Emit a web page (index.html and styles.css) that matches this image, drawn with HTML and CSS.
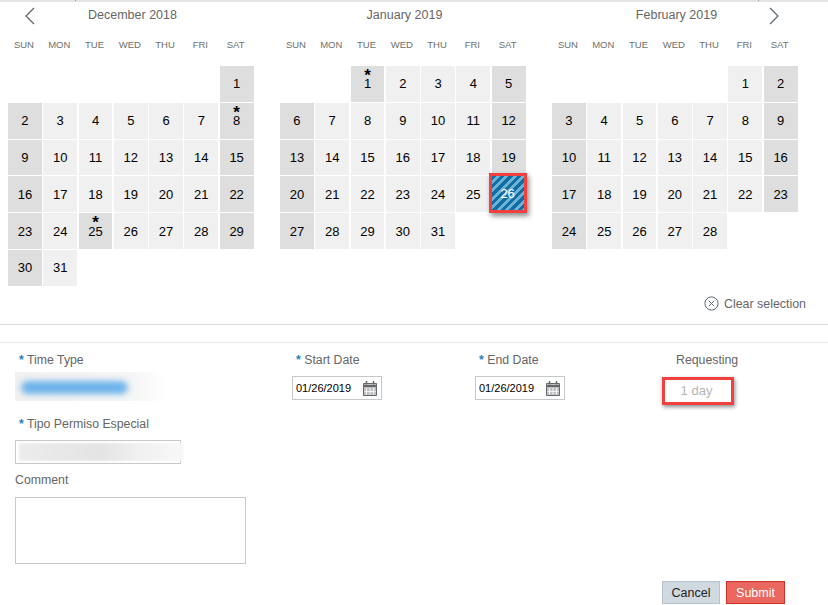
FILE: index.html
```html
<!DOCTYPE html>
<html lang="en">
<head>
<meta charset="utf-8">
<title>Time Off</title>
<link rel="stylesheet" href="styles.css">
</head>
<body>
<section class="calendars">
  <svg class="nav nav-prev" width="12" height="18" viewBox="0 0 12 18"><path d="M10 1 2 9l8 8" fill="none" stroke="#5f6a72" stroke-width="1.3"/></svg>
  <svg class="nav nav-next" width="12" height="18" viewBox="0 0 12 18"><path d="M2 1l8 8-8 8" fill="none" stroke="#5f6a72" stroke-width="1.3"/></svg>
  <div class="month">
    <h2 class="title">December 2018</h2>
    <div class="weekdays"><span>SUN</span><span>MON</span><span>TUE</span><span>WED</span><span>THU</span><span>FRI</span><span>SAT</span></div>
    <div class="days">
      <i class="s6"></i><b class="d w">1</b>
      <b class="d w">2</b><b class="d">3</b><b class="d">4</b><b class="d">5</b><b class="d">6</b><b class="d">7</b><b class="d w h">8</b>
      <b class="d w">9</b><b class="d">10</b><b class="d">11</b><b class="d">12</b><b class="d">13</b><b class="d">14</b><b class="d w">15</b>
      <b class="d w">16</b><b class="d">17</b><b class="d">18</b><b class="d">19</b><b class="d">20</b><b class="d">21</b><b class="d w">22</b>
      <b class="d w">23</b><b class="d">24</b><b class="d w h">25</b><b class="d">26</b><b class="d">27</b><b class="d">28</b><b class="d w">29</b>
      <b class="d w">30</b><b class="d">31</b>
    </div>
  </div>
  <div class="month">
    <h2 class="title">January 2019</h2>
    <div class="weekdays"><span>SUN</span><span>MON</span><span>TUE</span><span>WED</span><span>THU</span><span>FRI</span><span>SAT</span></div>
    <div class="days">
      <i class="s2"></i><b class="d w h">1</b><b class="d">2</b><b class="d">3</b><b class="d">4</b><b class="d w">5</b>
      <b class="d w">6</b><b class="d">7</b><b class="d">8</b><b class="d">9</b><b class="d">10</b><b class="d">11</b><b class="d w">12</b>
      <b class="d w">13</b><b class="d">14</b><b class="d">15</b><b class="d">16</b><b class="d">17</b><b class="d">18</b><b class="d w">19</b>
      <b class="d w">20</b><b class="d">21</b><b class="d">22</b><b class="d">23</b><b class="d">24</b><b class="d">25</b><b class="d sel">26</b>
      <b class="d w">27</b><b class="d">28</b><b class="d">29</b><b class="d">30</b><b class="d">31</b>
    </div>
  </div>
  <div class="month">
    <h2 class="title">February 2019</h2>
    <div class="weekdays"><span>SUN</span><span>MON</span><span>TUE</span><span>WED</span><span>THU</span><span>FRI</span><span>SAT</span></div>
    <div class="days">
      <i class="s5"></i><b class="d">1</b><b class="d w">2</b>
      <b class="d w">3</b><b class="d">4</b><b class="d">5</b><b class="d">6</b><b class="d">7</b><b class="d">8</b><b class="d w">9</b>
      <b class="d w">10</b><b class="d">11</b><b class="d">12</b><b class="d">13</b><b class="d">14</b><b class="d">15</b><b class="d w">16</b>
      <b class="d w">17</b><b class="d">18</b><b class="d">19</b><b class="d">20</b><b class="d">21</b><b class="d">22</b><b class="d w">23</b>
      <b class="d w">24</b><b class="d">25</b><b class="d">26</b><b class="d">27</b><b class="d">28</b>
    </div>
  </div>
</section>
<div class="clear-row">
  <svg width="15" height="15" viewBox="0 0 15 15"><circle cx="7.5" cy="7.5" r="6.6" fill="none" stroke="#5f6a72"/><path d="M4.800 4.800l5.400 5.400M10.200 4.800l-5.400 5.400" stroke="#5f6a72" fill="none"/></svg>
  <span>Clear selection</span>
</div>
<div class="band"></div>
<section class="form">
  <div class="row-top">
    <div class="field f-type">
      <label class="lbl"><em>*</em> Time Type</label>
      <div class="blur-wrap"><div class="blur-blue"></div></div>
    </div>
    <div class="field f-start">
      <label class="lbl"><em>*</em> Start Date</label>
      <div class="date"><span>01/26/2019</span>
        <svg width="14" height="15" viewBox="0 0 14 15"><path d="M.5 2.500h13v12H.5z" fill="#bfc1c2" stroke="#63686b"/><path d="M.5 5h13" stroke="#63686b" stroke-width="2"/><path d="M3.500 0v3.500M10.500 0v3.500" stroke="#63686b" stroke-width="1.500"/><path d="M3.500 7v6.500M7 7v6.500M10.500 7v6.500M1.500 10.500h11" stroke="#fff" stroke-width=".8"/></svg>
      </div>
    </div>
    <div class="field f-end">
      <label class="lbl"><em>*</em> End Date</label>
      <div class="date"><span>01/26/2019</span>
        <svg width="14" height="15" viewBox="0 0 14 15"><path d="M.5 2.500h13v12H.5z" fill="#bfc1c2" stroke="#63686b"/><path d="M.5 5h13" stroke="#63686b" stroke-width="2"/><path d="M3.500 0v3.500M10.500 0v3.500" stroke="#63686b" stroke-width="1.500"/><path d="M3.500 7v6.500M7 7v6.500M10.500 7v6.500M1.500 10.500h11" stroke="#fff" stroke-width=".8"/></svg>
      </div>
    </div>
    <div class="field f-req">
      <label class="lbl req-lbl">Requesting</label>
      <div class="req-box">1 day</div>
    </div>
  </div>
  <div class="field f-tipo">
    <label class="lbl"><em>*</em> Tipo Permiso Especial</label>
    <div class="tipo-box"><div class="tipo-blur"></div></div>
  </div>
  <div class="field f-comment">
    <label class="lbl">Comment</label>
    <div class="comment"></div>
  </div>
  <div class="actions">
    <button class="btn cancel" type="button">Cancel</button>
    <button class="btn submit" type="button">Submit</button>
  </div>
</section>
</body>
</html>
```
FILE: styles.css
```css
html, body { margin: 0; padding: 0; }
body {
  width: 828px;
  height: 605px;
  overflow: hidden;
  background: #fff;
  font-family: "Liberation Sans", Arial, sans-serif;
  color: #666;
}
.calendars {
  position: relative;
  display: flex;
  gap: 26px;
  height: 286px;
  box-sizing: border-box;
  padding-left: 8px;
  border-top: 2px solid #e4e4e4;
}
.calendars::before,
.calendars::after {
  content: "";
  position: absolute;
  top: -2px;
  width: 1px;
  height: 1px;
  background: #999;
}
.calendars::before { left: 75px; }
.calendars::after { left: 758px; }
.nav { position: absolute; top: 5px; }
.nav-prev { left: 24px; }
.nav-next { left: 768px; }
.month { width: 246px; }
.title {
  margin: 0;
  padding: 6px 0 0 3px;
  height: 21px;
  font-size: 12.500px;
  line-height: 15px;
  font-weight: 400;
  text-align: center;
  color: #666;
}
.weekdays {
  display: grid;
  grid-template-columns: repeat(7, 33.900px);
  column-gap: 1.400px;
  height: 37px;
  padding-top: 9px;
  box-sizing: border-box;
  font-size: 9.500px;
  line-height: 14px;
  text-align: center;
  color: #6e6e6e;
}
.weekdays span { transform: translateX(-1px); }
.days {
  display: grid;
  grid-template-columns: repeat(7, 33.900px);
  grid-auto-rows: 35.800px;
  gap: 1px 1.400px;
}
.s2 { grid-column: span 2; }
.s5 { grid-column: span 5; }
.s6 { grid-column: span 6; }
.d {
  position: relative;
  display: flex;
  align-items: center;
  justify-content: center;
  background: #f0f0f0;
  font-size: 13px;
  font-weight: 400;
  color: #000;
}
.w { background: #dedede; }
.h::before {
  content: "*";
  position: absolute;
  top: 1px;
  left: 0;
  right: 0;
  text-align: center;
  font-size: 17px;
  line-height: 17px;
  font-weight: 700;
  color: #000;
}
.sel {
  z-index: 1;
  margin: -3px -1px -1px -3px;
  border: 3px solid #f2403f;
  color: #fff;
  background: repeating-linear-gradient(135deg, #0e6fa6 0 3px, #6fb2d2 3px 6px);
  box-shadow: 2px 3px 5px rgba(0, 0, 0, .45);
}
.clear-row {
  display: flex;
  justify-content: flex-end;
  align-items: center;
  gap: 5px;
  height: 38px;
  padding: 0 22px 3px 0;
  box-sizing: border-box;
  font-size: 12.400px;
  color: #666;
}
.band {
  height: 17px;
  border-top: 1px solid #dcdcdc;
  border-bottom: 1px solid #e8e8e8;
}
.form { position: relative; padding-left: 15px; }
.row-top { display: flex; height: 72px; }
.field { display: flex; flex-direction: column; }
.lbl { font-size: 12.300px; line-height: 15px; color: #666; padding-top: 10px; }
.lbl em { font-style: normal; font-weight: 700; color: #1f7fc4; padding-left: 4px; }
.f-type { width: 277px; }
.f-start { width: 183px; }
.f-end { width: 200px; }
.blur-wrap {
  width: 150px;
  height: 29px;
  margin-top: 4px;
  background: linear-gradient(90deg, #f1f1f1 0, #f6f6f6 80%, #fff 100%);
}
.blur-blue {
  width: 107px;
  height: 13px;
  margin: 9px 0 0 6px;
  border-radius: 7px;
  background: #6ab2ea;
  filter: blur(3px);
}
.date {
  display: flex;
  align-items: center;
  justify-content: space-between;
  box-sizing: border-box;
  width: 90px;
  height: 24px;
  margin-top: 8px;
  padding: 0 4px 0 3px;
  border: 1px solid #c5c9cc;
  font-size: 11px;
  color: #000;
}
.req-lbl { padding-left: 1px; }
.req-box {
  box-sizing: border-box;
  width: 72px;
  height: 28px;
  margin: 9px 0 0 -13px;
  padding-right: 3px;
  border: 3px solid #f2403f;
  box-shadow: 1px 2px 4px rgba(0, 0, 0, .45);
  font-size: 13px;
  line-height: 22px;
  text-align: center;
  color: #b5b5b5;
}
.f-tipo .lbl { padding-top: 2px; }
.tipo-box {
  box-sizing: border-box;
  position: relative;
  width: 166px;
  height: 24px;
  margin-top: 8px;
  border: 1px solid #c5c9cc;
}
.tipo-blur {
  position: absolute;
  top: 2px;
  left: 3px;
  width: 165px;
  height: 18px;
  background: linear-gradient(90deg, #ececec 0, #e4e4e4 50%, #f0f0f0 72%, #f8f8f8 100%);
  filter: blur(1px);
}
.f-comment .lbl { padding-top: 9px; }
.comment {
  box-sizing: border-box;
  width: 231px;
  height: 67px;
  margin-top: 9px;
  border: 1px solid #c5c9cc;
}
.actions {
  display: flex;
  justify-content: flex-end;
  gap: 6px;
  margin-top: 17px;
  padding-right: 43px;
}
.btn {
  box-sizing: border-box;
  width: 59px;
  height: 23px;
  padding: 0;
  font-family: inherit;
  font-size: 12.500px;
}
.cancel { width: 58px; background: #d0d9e0; border: 1px solid #b9c2c9; color: #222; }
.submit { background: #ea6760; border: 1px solid #d3302a; color: #fff; }
```
